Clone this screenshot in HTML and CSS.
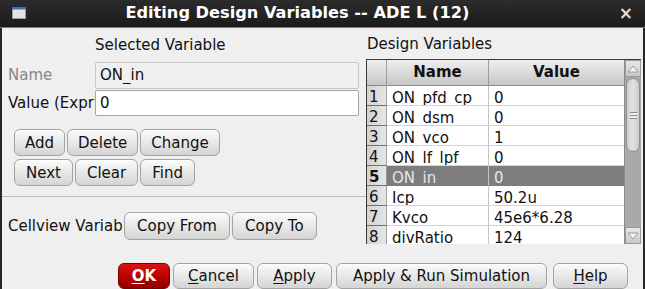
FILE: index.html
```html
<!DOCTYPE html>
<html lang="en">
<head>
  <meta charset="UTF-8" />
  <title>Editing Design Variables -- ADE L (12)</title>
  <link rel="stylesheet" href="styles.css">
</head>
<body>
  <div class="titlebar">
    <svg class="win-icon" width="14" height="12" viewBox="0 0 14 12">
      <rect x="0.5" y="0.5" width="13" height="11" fill="#e4e4e4" stroke="#9a9a9a"/>
      <rect x="0" y="0" width="14" height="2.5" fill="#3b6fc4"/>
    </svg>
    <div class="title">Editing Design Variables -- ADE L (12)</div>
    <div class="close">&#215;</div>
  </div>

  <div class="window">
    <div class="main">
      <div class="left">
        <div class="caption">Selected Variable</div>
        <div class="field">
          <span class="label muted">Name</span>
          <input class="entry disabled" type="text" value="ON_in" readonly>
        </div>
        <div class="field">
          <span class="label">Value (Expr)</span>
          <input class="entry" type="text" value="0">
        </div>
        <div class="btn-row first">
          <button class="btn">Add</button>
          <button class="btn">Delete</button>
          <button class="btn">Change</button>
        </div>
        <div class="btn-row second">
          <button class="btn">Next</button>
          <button class="btn">Clear</button>
          <button class="btn">Find</button>
        </div>
        <div class="separator"></div>
        <div class="cellview">
          <span class="label wide">Cellview Variables</span>
          <button class="btn pad">Copy From</button>
          <button class="btn pad">Copy To</button>
        </div>
      </div>

      <div class="right">
        <div class="caption-right">Design Variables</div>
        <div class="table">
          <div class="grid">
            <div class="corner"></div>
            <div class="head">Name</div>
            <div class="head last">Value</div>

            <div class="num">1</div><div class="cell name">ON_pfd_cp</div><div class="cell">0</div>
            <div class="num">2</div><div class="cell name">ON_dsm</div><div class="cell">0</div>
            <div class="num">3</div><div class="cell name">ON_vco</div><div class="cell">1</div>
            <div class="num">4</div><div class="cell name">ON_lf_lpf</div><div class="cell">0</div>
            <div class="num current">5</div><div class="cell name selected">ON_in</div><div class="cell selected">0</div>
            <div class="num">6</div><div class="cell name">Icp</div><div class="cell">50.2u</div>
            <div class="num">7</div><div class="cell name">Kvco</div><div class="cell">45e6*6.28</div>
            <div class="num">8</div><div class="cell name">divRatio</div><div class="cell">124</div>
          </div>
          <div class="scrollbar">
            <div class="arrow">
              <svg width="12" height="8" viewBox="0 0 12 8"><path d="M1 7 L6 1 L11 7 Z" fill="#f4f4f4" stroke="#9a9a9a"/></svg>
            </div>
            <div class="thumb"><span class="grip"></span></div>
            <div class="track"></div>
            <div class="arrow">
              <svg width="12" height="8" viewBox="0 0 12 8"><path d="M1 1 L6 7 L11 1 Z" fill="#f4f4f4" stroke="#9a9a9a"/></svg>
            </div>
          </div>
        </div>
      </div>
    </div>

    <div class="footer">
      <button class="btn ok"><u>O</u>K</button>
      <button class="btn w-cancel"><u>C</u>ancel</button>
      <button class="btn w-apply"><u>A</u>pply</button>
      <button class="btn w-run">Apply &amp; Run Simulation</button>
      <button class="btn w-help"><u>H</u>elp</button>
    </div>
  </div>
</body>
</html>
```

FILE: styles.css
```css
* {
  margin: 0;
  padding: 0;
  box-sizing: border-box;
}

body {
  width: 645px;
  height: 289px;
  overflow: hidden;
  background: #efefef;
  font-family: 'DejaVu Sans', sans-serif;
  font-size: 15px;
  color: #111;
}

.titlebar {
  height: 28px;
  display: flex;
  align-items: center;
  background: linear-gradient(#2c2c2c, #1b1b1b);
  border-bottom: 1px solid #6d7f99;
  color: #fff;
  padding: 0 12px;
}

.win-icon {
  margin-top: -2px;
}

.title {
  flex: 1;
  text-align: center;
  font-weight: bold;
  font-size: 16.2px;
  margin-top: -2px;
  padding-right: 50px;
}

.close {
  color: #ddd;
  font-size: 17px;
  font-weight: bold;
  margin-top: -2px;
}

.window {
  height: 261px;
  border-left: 2px solid #262626;
  border-right: 2px solid #262626;
}

.main {
  display: flex;
}

.left {
  width: 364px;
}

.caption {
  margin: 8px 0 0 93px;
  height: 18px;
  line-height: 18px;
}

.field {
  display: flex;
  align-items: center;
  height: 26px;
  margin-top: 8px;
  padding-left: 6px;
}

.field + .field {
  margin-top: 2px;
}

.label {
  width: 87px;
  white-space: nowrap;
  overflow: hidden;
}

.label.muted {
  color: #888;
}

.entry {
  width: 264px;
  height: 26px;
  font: inherit;
  padding: 0 4px;
  border: 1px solid #a6a6a6;
  border-radius: 2px;
  background: #fff;
  color: #111;
  outline: none;
}

.entry.disabled {
  background: #efefef;
  border-color: #c6c6c6;
  height: 27px;
}

.btn {
  height: 27px;
  padding: 0 10px;
  font: inherit;
  color: #111;
  border: 1px solid #a3a3a3;
  border-radius: 6px;
  background: linear-gradient(#fbfbfb, #e6e6e6 55%, #d4d4d4);
  box-shadow: inset 0 1px 0 #fff;
}

.btn u {
  text-decoration-thickness: 1px;
  text-underline-offset: 2px;
}

.btn-row {
  display: flex;
  gap: 2px;
  padding-left: 12px;
  margin-top: 2px;
}

.btn-row.first {
  margin-top: 13px;
}

.btn-row.second {
  margin-top: 3px;
}

.btn-row.second .btn {
  padding: 0 11px;
}

.separator {
  height: 1px;
  background: #bcbcbc;
  margin-top: 10px;
  margin-right: -2px;
}

.cellview {
  display: flex;
  align-items: center;
  gap: 2px;
  margin-top: 15px;
  padding-left: 6px;
}

.label.wide {
  width: 114px;
}

.btn.pad {
  height: 28px;
  padding: 0 12px;
}

.right {
  width: 275px;
}

.caption-right {
  margin: 7px 0 0 1px;
  height: 18px;
  line-height: 18px;
}

.table {
  display: flex;
  height: 185px;
  margin-top: 6px;
  border: 1px solid #3a3a3a;
  border-right: none;
  border-bottom: none;
  background: #fff;
}

.grid {
  flex: 1;
  display: grid;
  grid-template-columns: 20px 102px 135px;
  grid-template-rows: 26px repeat(8, 20px);
  overflow: hidden;
}

.corner,
.head {
  background: linear-gradient(#efefef, #d6d6d6 60%, #c6c6c6);
  border-right: 1px solid #9c9c9c;
  border-bottom: 1px solid #8c8c8c;
}

.head {
  font-weight: bold;
  text-align: center;
  line-height: 25px;
}

.head.last {
  border-right: none;
}

.num {
  background: linear-gradient(90deg, #d2d2d2, #e6e6e6);
  border-bottom: 1px solid #707070;
  border-right: 1px solid #9c9c9c;
  padding: 2px 0 0 2px;
  line-height: 18px;
  overflow: hidden;
}

.num.current {
  font-weight: bold;
}

.cell {
  padding: 3px 0 0 5px;
  line-height: 18px;
  white-space: nowrap;
  overflow: hidden;
  border-bottom: 1px solid #d4d4d4;
}

.cell.name {
  border-right: 1px solid #c4c4c4;
}

.cell.selected {
  background: #7d7d7d;
  color: #e6e6e6;
  border-bottom-color: #7d7d7d;
}

.scrollbar {
  width: 17px;
  display: flex;
  flex-direction: column;
  background: #a9a9a9;
  border-left: 1px solid #8a8a8a;
}

.arrow {
  height: 17px;
  display: flex;
  align-items: center;
  justify-content: center;
  background: linear-gradient(#e8e8e8, #c8c8c8);
  border: 1px solid #9a9a9a;
}

.thumb {
  height: 74px;
  margin: 1px 1px 0;
  border: 1px solid #8e8e8e;
  border-radius: 7px;
  background: linear-gradient(90deg, #d0d0d0, #e2e2e2 50%, #cacaca);
  display: flex;
  align-items: center;
  justify-content: center;
}

.grip {
  width: 7px;
  height: 7px;
  border-top: 1px solid #8a8a8a;
  border-bottom: 1px solid #8a8a8a;
  background: linear-gradient(#efefef 0 2px, #8a8a8a 2px 3px, #efefef 3px);
}

.track {
  flex: 1;
}

.footer {
  display: flex;
  justify-content: flex-end;
  gap: 3px;
  margin-top: 19px;
  padding-right: 15px;
}

.footer .btn {
  height: 26px;
}

.btn.ok {
  width: 52px;
  color: #fff;
  font-weight: bold;
  border-color: #7a0000;
  background: linear-gradient(#e01010, #b50000 55%, #900000);
  box-shadow: none;
}

.btn.w-cancel {
  width: 81px;
}

.btn.w-apply {
  width: 75px;
}

.btn.w-run {
  width: 211px;
  margin-left: 1px;
}

.btn.w-help {
  width: 75px;
  margin-left: 3px;
}
```
